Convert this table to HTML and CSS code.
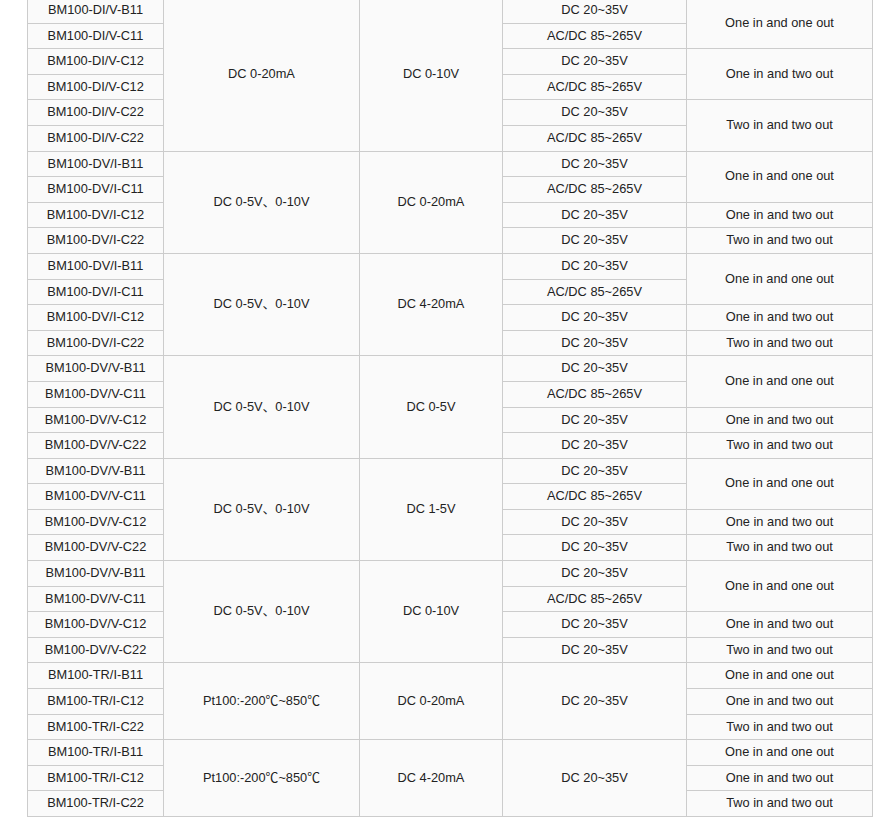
FILE: index.html
```html
<!DOCTYPE html>
<html>
<head>
<meta charset="utf-8">
<link rel="stylesheet" href="styles.css">
</head>
<body>
<table class="spec">
<colgroup>
<col class="c1"><col class="c2"><col class="c3"><col class="c4"><col class="c5">
</colgroup>
<tbody>
<tr><td>BM100-DI/V-B11</td><td rowspan="6">DC 0-20mA</td><td rowspan="6">DC 0-10V</td><td>DC 20~35V</td><td rowspan="2">One in and one out</td></tr>
<tr><td>BM100-DI/V-C11</td><td>AC/DC 85~265V</td></tr>
<tr><td>BM100-DI/V-C12</td><td>DC 20~35V</td><td rowspan="2">One in and two out</td></tr>
<tr><td>BM100-DI/V-C12</td><td>AC/DC 85~265V</td></tr>
<tr><td>BM100-DI/V-C22</td><td>DC 20~35V</td><td rowspan="2">Two in and two out</td></tr>
<tr><td>BM100-DI/V-C22</td><td>AC/DC 85~265V</td></tr>

<tr><td>BM100-DV/I-B11</td><td rowspan="4">DC 0-5V、0-10V</td><td rowspan="4">DC 0-20mA</td><td>DC 20~35V</td><td rowspan="2">One in and one out</td></tr>
<tr><td>BM100-DV/I-C11</td><td>AC/DC 85~265V</td></tr>
<tr><td>BM100-DV/I-C12</td><td>DC 20~35V</td><td>One in and two out</td></tr>
<tr><td>BM100-DV/I-C22</td><td>DC 20~35V</td><td>Two in and two out</td></tr>

<tr><td>BM100-DV/I-B11</td><td rowspan="4">DC 0-5V、0-10V</td><td rowspan="4">DC 4-20mA</td><td>DC 20~35V</td><td rowspan="2">One in and one out</td></tr>
<tr><td>BM100-DV/I-C11</td><td>AC/DC 85~265V</td></tr>
<tr><td>BM100-DV/I-C12</td><td>DC 20~35V</td><td>One in and two out</td></tr>
<tr><td>BM100-DV/I-C22</td><td>DC 20~35V</td><td>Two in and two out</td></tr>

<tr><td>BM100-DV/V-B11</td><td rowspan="4">DC 0-5V、0-10V</td><td rowspan="4">DC 0-5V</td><td>DC 20~35V</td><td rowspan="2">One in and one out</td></tr>
<tr><td>BM100-DV/V-C11</td><td>AC/DC 85~265V</td></tr>
<tr><td>BM100-DV/V-C12</td><td>DC 20~35V</td><td>One in and two out</td></tr>
<tr><td>BM100-DV/V-C22</td><td>DC 20~35V</td><td>Two in and two out</td></tr>

<tr><td>BM100-DV/V-B11</td><td rowspan="4">DC 0-5V、0-10V</td><td rowspan="4">DC 1-5V</td><td>DC 20~35V</td><td rowspan="2">One in and one out</td></tr>
<tr><td>BM100-DV/V-C11</td><td>AC/DC 85~265V</td></tr>
<tr><td>BM100-DV/V-C12</td><td>DC 20~35V</td><td>One in and two out</td></tr>
<tr><td>BM100-DV/V-C22</td><td>DC 20~35V</td><td>Two in and two out</td></tr>

<tr><td>BM100-DV/V-B11</td><td rowspan="4">DC 0-5V、0-10V</td><td rowspan="4">DC 0-10V</td><td>DC 20~35V</td><td rowspan="2">One in and one out</td></tr>
<tr><td>BM100-DV/V-C11</td><td>AC/DC 85~265V</td></tr>
<tr><td>BM100-DV/V-C12</td><td>DC 20~35V</td><td>One in and two out</td></tr>
<tr><td>BM100-DV/V-C22</td><td>DC 20~35V</td><td>Two in and two out</td></tr>

<tr><td>BM100-TR/I-B11</td><td rowspan="3">Pt100:-200℃~850℃</td><td rowspan="3">DC 0-20mA</td><td rowspan="3">DC 20~35V</td><td>One in and one out</td></tr>
<tr><td>BM100-TR/I-C12</td><td>One in and two out</td></tr>
<tr><td>BM100-TR/I-C22</td><td>Two in and two out</td></tr>

<tr><td>BM100-TR/I-B11</td><td rowspan="3">Pt100:-200℃~850℃</td><td rowspan="3">DC 4-20mA</td><td rowspan="3">DC 20~35V</td><td>One in and one out</td></tr>
<tr><td>BM100-TR/I-C12</td><td>One in and two out</td></tr>
<tr><td>BM100-TR/I-C22</td><td>Two in and two out</td></tr>
</tbody>
</table>
</body>
</html>
```

FILE: styles.css
```css
html, body {
  margin: 0;
  padding: 0;
  background: #ffffff;
}

.spec {
  margin: -3px 0 0 27px;
  width: 846px;
  table-layout: fixed;
  border-collapse: collapse;
  font-family: Arial, "Liberation Sans", "Noto Sans CJK SC", sans-serif;
  font-size: 12.8px;
  color: #222222;
  background: #fafafa;
}

.c1 { width: 136px; }
.c2 { width: 196px; }
.c3 { width: 143px; }
.c4 { width: 184px; }
.c5 { width: 186px; }

.spec td {
  border: 1px solid #cccccc;
  padding: 0;
  line-height: 24.6px;
  text-align: center;
  vertical-align: middle;
  white-space: nowrap;
}
```
